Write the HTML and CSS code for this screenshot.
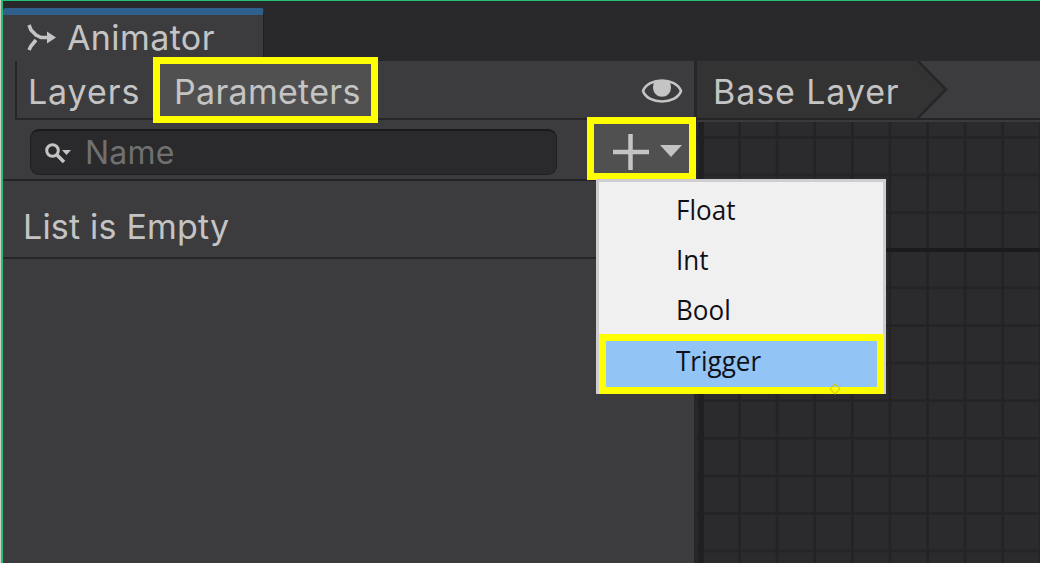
FILE: index.html
```
<!DOCTYPE html>
<html lang="en">
<head>
    <meta charset="UTF-8">
    <meta name="viewport" content="width=device-width, initial-scale=1.0">
    <title>Animator</title>
    <link rel="stylesheet" href="styles.css">
</head>
<body>
    <div class="window">
        <header class="tabs">
            <div class="tab">
                <svg class="tab-icon" width="30" height="28" viewBox="0 0 30 28" fill="none" stroke="#c4c4c4" stroke-width="3.6">
                    <path d="M3 1 L5 6 L10 11 L15 13.5 H23 M3 26 L5 22 L10 16"/>
                    <path d="M21 7.5 L30 13.5 L21 19.5 Z" fill="#c4c4c4" stroke="none"/>
                </svg>
                <span class="tab-title">Animator</span>
            </div>
        </header>

        <main class="content">
            <section class="side">
                <div class="toolbar">
                    <span class="layers">Layers</span>
                    <button class="parameters" type="button">Parameters</button>
                    <svg class="eye" width="42" height="26" viewBox="0 0 42 26">
                        <path d="M2 13 C7 -1 35 -1 40 13 C35 27 7 27 2 13 Z" fill="none" stroke="#c4c4c4" stroke-width="2.6"/>
                        <path d="M13 3 H29 L30 9 C30 22 12 22 12 9 Z" fill="#c4c4c4"/>
                    </svg>
                </div>

                <div class="search-row">
                    <div class="search">
                        <svg width="28" height="24" viewBox="0 0 28 24" fill="none" stroke="#c4c4c4">
                            <circle cx="8.5" cy="8.5" r="5.8" stroke-width="3"/>
                            <path d="M13 13 L20 20" stroke-width="3.5"/>
                            <path d="M18 8 H27 L22.5 13 Z" fill="#c4c4c4" stroke="none"/>
                        </svg>
                        <span class="name">Name</span>
                    </div>
                    <button class="add" type="button">
                        <svg width="95" height="49" viewBox="0 0 95 49">
                            <path d="M19 28 H55 M36.5 10 V46" stroke="#c4c4c4" stroke-width="4.5"/>
                            <path d="M66 21 H88 L77 33 Z" fill="#c4c4c4"/>
                        </svg>
                    </button>
                    <ul class="menu">
                        <li><span>Float</span></li>
                        <li><span>Int</span></li>
                        <li><span>Bool</span></li>
                        <li class="selected"><span>Trigger</span></li>
                    </ul>
                </div>

                <div class="empty">List is Empty</div>
            </section>

            <section class="graph">
                <div class="breadcrumb">
                    <span class="crumb">Base Layer</span>
                    <svg class="arrow" width="34" height="57" viewBox="0 0 34 57">
                        <path d="M0 0 H3 L31 28.5 L3 57 H0 Z" fill="#333333"/>
                        <path d="M3 0 L31 28.5 L3 57" fill="none" stroke="#262628" stroke-width="2.5"/>
                    </svg>
                </div>
                <svg class="grid" width="343" height="441" viewBox="0 0 343 441">
                    <defs>
                        <pattern id="cell" x="41" y="14" width="37.6" height="37.6" patternUnits="userSpaceOnUse">
                            <path d="M1.5 0 V37.6 M0 1.5 H37.6" stroke="#232224" stroke-width="2.6"/>
                        </pattern>
                    </defs>
                    <rect width="343" height="441" fill="url(#cell)"/>
                    <path d="M4 0 V441" stroke="#202022" stroke-width="6"/>
                    <path d="M0 128 H343" stroke="#1b1b1d" stroke-width="4"/>
                </svg>
            </section>
        </main>
    </div>
</body>
</html>
```
FILE: styles.css
```
* {
    box-sizing: border-box;
}

body {
    margin: 0;
    padding-left: 1px;
    background: #d5cfc4;
    font-family: Inter, "Liberation Sans", sans-serif;
    font-size: 34px;
    color: #c4c4c4;
    overflow: hidden;
}

button {
    padding: 0;
    font: inherit;
    color: inherit;
}

svg {
    display: block;
    flex-shrink: 0;
}

span {
    white-space: nowrap;
}

.window {
    height: 563px;
    border-left: 2px solid #22c077;
    border-top: 1px solid #22c077;
    background: #3c3c3e;
    display: flex;
    flex-direction: column;
}

.tabs {
    height: 60px;
    padding-top: 7px;
    background: #29282a;
    flex-shrink: 0;
}

.tab {
    width: 261px;
    height: 53px;
    padding: 0 0 1px 23px;
    border-top: 7px solid #2f5f8c;
    border-right: 1px solid #202022;
    border-radius: 3px 3px 0 0;
    background: #3c3c3e;
    display: flex;
    align-items: center;
}

.tab-title {
    margin-left: 11px;
    letter-spacing: 0.4px;
}

.content {
    flex: 1;
    display: flex;
}

.side {
    width: 694px;
    border-right: 3px solid #262628;
}

.toolbar {
    height: 59px;
    border-bottom: 2px solid #262628;
    margin-left: 12px;
    border-left: 2px solid #262628;
    padding-left: 11px;
    display: flex;
    align-items: center;
}

.layers {
    width: 125px;
    padding-top: 4px;
    letter-spacing: 0.9px;
}

.parameters {
    width: 225px;
    height: 66px;
    margin: 0 auto 0 0;
    border: 7px solid #ffff00;
    background: #505050;
    flex-shrink: 0;
    text-align: left;
    padding: 4px 0 0 14px;
    letter-spacing: 0.3px;
}

.eye {
    margin: 2px 11px 0 0;
}

.search-row {
    position: relative;
    height: 61px;
    border-bottom: 2px solid #242426;
    display: flex;
    align-items: center;
}

.search {
    width: 527px;
    height: 46px;
    margin: 4px 0 0 27px;
    padding-left: 13px;
    border: 1px solid #202022;
    border-top: 2px solid #19191b;
    border-radius: 9px;
    background: #2a2a2c;
    color: #707070;
    display: flex;
    align-items: center;
}

.search svg {
    margin-top: 3px;
}

.name {
    margin: 1px 0 0 13px;
    font-size: 32px;
    letter-spacing: 0.2px;
}

/* sits over the panel divider */
.add {
    position: absolute;
    left: 584px;
    top: -3px;
    width: 109px;
    height: 63px;
    border: 7px solid #ffff00;
    background: #505050;
}

.menu {
    position: absolute;
    z-index: 1;
    left: 593px;
    top: 59px;
    width: 290px;
    height: 215px;
    margin: 0;
    padding: 2px 0 0;
    border: 3px solid #cfcdcf;
    background: #f1f0f1;
    color: #101018;
    list-style: none;
    font-family: "Open Sans", "Noto Sans", sans-serif;
    font-size: 28px;
}

.menu li {
    height: 50px;
    padding-left: 77px;
    display: flex;
    align-items: center;
}

.menu .selected {
    position: relative;
    width: 285px;
    height: 60px;
    padding: 0 0 9px 70px;
    border: 7px solid #ffff00;
    background: #92c5f5;
}

/* drag handle on the highlight frame */
.menu .selected::after {
    content: "";
    position: absolute;
    left: 225px;
    bottom: -6px;
    width: 6px;
    height: 6px;
    border: 1px solid #d2cc00;
    transform: rotate(45deg);
}

.menu span {
    transform: scaleX(0.93);
    transform-origin: left;
}

.empty {
    height: 78px;
    padding: 14px 0 0 20px;
    line-height: 64px;
    letter-spacing: 0.2px;
    border-bottom: 2px solid #262628;
}

.graph {
    flex: 1;
    background: #2b2a2c;
}

.breadcrumb {
    height: 61px;
    border-bottom: 2px solid #3a3a3c;
    box-shadow: inset 0 -2px #242426;
    background: #3c3c3e;
    display: flex;
}

.crumb {
    width: 218px;
    height: 57px;
    padding: 3px 0 0 16px;
    line-height: 56px;
    background: #333333;
    letter-spacing: 0.9px;
}
```
